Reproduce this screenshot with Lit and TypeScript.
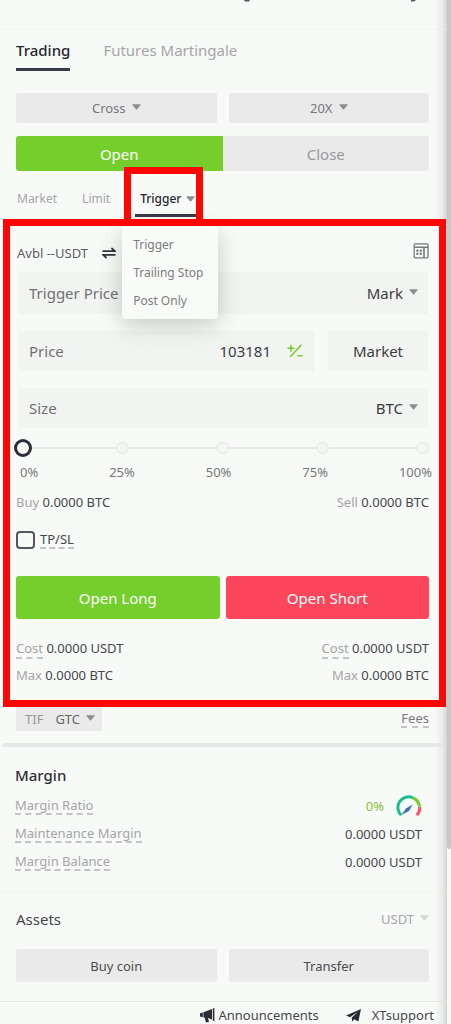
import { LitElement, html, css, svg } from "lit";
import { customElement, property, state } from "lit/decorators.js";
import { classMap } from "lit/directives/class-map.js";

const caret = html`<svg class="caret" width="9" height="6" viewBox="0 0 10 6" aria-hidden="true">
  <path d="M0.8 0h8.4q0.8 0.2 0.3 0.9L5.6 5.5q-0.6 0.6-1.2 0L0.5 0.9Q0 0.2 0.8 0z" fill="currentColor" />
</svg>`;

const shared = css`
  * {
    box-sizing: border-box;
  }
  button,
  input,
  select {
    font: inherit;
    color: inherit;
    background: none;
    border: 0;
    border-radius: 0;
    margin: 0;
    padding: 0;
  }
  button,
  select {
    cursor: pointer;
  }
  a {
    color: inherit;
    text-decoration: none;
  }
`;

@customElement("pick-list")
class PickList extends LitElement {
  @property() label = "";
  @property() value = "";
  @property({ type: Array }) options: string[] = [];

  static styles = [
    shared,
    css`
      :host {
        display: inline-flex;
      }
      .pick {
        display: flex;
        align-items: center;
        gap: 6px;
      }
      select {
        appearance: none;
        field-sizing: content;
        outline-offset: 2px;
      }
      .caret {
        margin-bottom: 2px;
        color: var(--caret, #8d8e91);
        pointer-events: none;
      }
    `,
  ];

  render() {
    return html`<label class="pick">
      <select aria-label=${this.label}>
        ${this.options.map((o) => html`<option ?selected=${o === this.value}>${o}</option>`)}
      </select>
      ${caret}
    </label>`;
  }
}

@customElement("app-root")
class AppRoot extends LitElement {
  @state() private percent = 0;
  @state() private side = "Open";

  static styles = [
    shared,
    css`
      :host {
        display: grid;
        grid-template-columns: minmax(0, 1fr) 4px;
        min-height: 100vh;
        background: #f8faf7;
        color: #46474c;
        font: 13px/20px "Noto Sans", "Open Sans", sans-serif;
        overflow: hidden;
      }
      .page {
        background: linear-gradient(to left, #d2d3d2, #e9eae8 4px, #f8faf7 12px);
      }
      .rail {
        background: #f8faf7;
      }
      .rail-thumb {
        height: 849px;
        background: #c6c7c6;
        border-radius: 0 0 2px 2px;
      }
      .clipped {
        display: flex;
        justify-content: flex-end;
        gap: 161px;
        height: 30px;
        padding-right: 30px;
        border-bottom: 1px dotted #eeefed;
      }
      .inset {
        padding: 0 18px 0 16px;
      }
      .tabs {
        display: flex;
        gap: 33px;
        height: 41px;
        font-size: 15px;
        color: #a5a5a9;
      }
      .tabs button {
        padding-top: 2px;
        border-bottom: 3px solid transparent;
      }
      .tabs .on {
        color: #26262e;
        font-weight: 500;
        border-color: #3a3947;
      }
      .pair {
        display: grid;
        grid-template-columns: 1fr 1fr;
        gap: 12px;
      }
      .modes {
        margin-top: 22px;
      }
      .grey {
        display: flex;
        align-items: center;
        justify-content: center;
        height: 30px;
        background: #eaeaea;
        border-radius: 2px;
        color: #77787b;
      }
      .sides {
        display: grid;
        grid-template-columns: 1fr 1fr;
        height: 35px;
        margin-top: 13px;
        border-radius: 3px;
        overflow: hidden;
        background: #eaeaea;
        color: #98989b;
        font-size: 15px;
      }
      .sides .on {
        background: #74ce2b;
        color: #fff;
      }
      .kinds {
        display: flex;
        gap: 25px;
        height: 48px;
        padding: 8px 0 0 1px;
        color: #a5a5a9;
        font-size: 12px;
      }
      .kinds > button {
        height: 40px;
      }
      .kind-open {
        position: relative;
        display: flex;
        align-items: flex-start;
        height: 38px;
        padding: 10px 3px 0 5px;
        border-bottom: 3px solid #3a3947;
        color: #26262e;
        font-weight: 500;
      }
      .kind-open button {
        display: flex;
        align-items: center;
        gap: 5px;
      }
      .caret {
        color: #8d8e91;
      }
      .menu {
        position: absolute;
        z-index: 2;
        top: 47px;
        left: -13px;
        width: 96px;
        margin: 0;
        padding: 5px 0 4px;
        list-style: none;
        background: #f9fbf8;
        border-radius: 4px;
        box-shadow: 0 6px 24px rgba(0, 0, 0, 0.2);
        color: #7d7d80;
        font-weight: 400;
      }
      .menu button {
        display: block;
        padding: 0;
        margin-left: 11px;
        line-height: 28px;
        white-space: nowrap;
      }
      .mark-small {
        position: absolute;
        z-index: 3;
        inset: -12px -5px -12px -11px;
        border: 7px solid #fe0603;
        pointer-events: none;
      }
      .ticket {
        position: relative;
        padding: 24px 18px 22px 16px;
      }
      .mark-large {
        position: absolute;
        z-index: 3;
        inset: 0 1px 0 3px;
        border: 7px solid #fe0603;
        pointer-events: none;
      }
      .row {
        display: flex;
        align-items: center;
        justify-content: space-between;
      }
      .avbl {
        display: flex;
        align-items: center;
        gap: 14px;
        padding-left: 1px;
        color: #5c5d61;
      }
      .icon-btn {
        display: flex;
      }
      .fields {
        display: grid;
        gap: 17px;
        padding: 0 1px 0 3px;
        margin-top: 9px;
        font-size: 15px;
      }
      .field {
        display: flex;
        align-items: center;
        justify-content: space-between;
        min-width: 0;
        height: 40px;
        padding: 0 10px;
        background: #f2f4f1;
        color: #707175;
      }
      .field.tall {
        height: 42px;
      }
      .field input {
        flex: 1;
        min-width: 0;
        width: 0;
        text-align: right;
        color: #3b3c44;
        outline: none;
      }
      .field pick-list,
      .flat {
        color: #3b3c44;
      }
      .field.price input {
        margin-right: 16px;
      }
      .price-row {
        display: grid;
        grid-template-columns: 295fr 100fr;
        gap: 14px;
      }
      .flat {
        background: #f2f4f1;
      }
      .slider {
        position: relative;
        height: 20px;
        margin: 10px -2px 0;
      }
      .slider svg {
        display: block;
        width: 100%;
        height: 20px;
        overflow: visible;
      }
      .slider input {
        position: absolute;
        inset: 0;
        width: 100%;
        height: 20px;
        appearance: none;
      }
      .slider input::-webkit-slider-thumb {
        appearance: none;
        width: 18px;
        height: 18px;
        border: 3px solid #2d2c38;
        border-radius: 50%;
        background: #f8faf7;
      }
      .scale {
        display: flex;
        justify-content: space-between;
        margin: 4px -3px 0 4px;
        color: #77787b;
      }
      .totals {
        margin-top: 10px;
      }
      .soft {
        color: #a5a5a9;
      }
      .dash {
        border-bottom: 2px dashed #c4c4c6;
      }
      .tpsl {
        display: flex;
        align-items: center;
        gap: 5px;
        margin-top: 18px;
        height: 20px;
        line-height: 16px;
        color: #46474c;
      }
      .tpsl input {
        appearance: none;
        width: 19px;
        height: 18px;
        border: 2px solid #55555f;
        border-radius: 4px;
      }
      .tpsl input:checked {
        background: #74ce2b;
      }
      .actions {
        display: grid;
        grid-template-columns: 1fr 1fr;
        gap: 6px;
        margin-top: 26px;
        color: #fff;
        font-size: 15px;
      }
      .actions button {
        height: 43px;
        border-radius: 3px;
      }
      .long {
        background: #74ce2b;
      }
      .short {
        background: #fd465b;
      }
      .costs {
        display: grid;
        gap: 7px;
        margin-top: 19px;
      }
      .tif {
        display: flex;
        align-items: center;
        gap: 12px;
        height: 24px;
        padding: 0 7px 0 9px;
        background: #eaeaea;
        color: #98989b;
      }
      .tif pick-list {
        color: #66676b;
      }
      .fees {
        color: #77787b;
        line-height: 16px;
      }
      .rule {
        height: 4px;
        margin: 12px 4px 0 3px;
        border: 0;
        background: #e7e8e8;
      }
      h2 {
        margin: 0;
        font-size: 15px;
        line-height: 20px;
        font-weight: 500;
        color: #2f3037;
      }
      .margin {
        padding: 18px 25px 19px 15px;
        border-bottom: 1px dotted #eeefed;
      }
      .stats {
        display: grid;
        gap: 8px;
        margin: 11px 0 0;
      }
      .stats .row {
        height: 20px;
      }
      .stats dt {
        color: #a5a5a9;
        line-height: 16px;
      }
      .stats dd {
        display: flex;
        align-items: center;
        gap: 12px;
        margin: 0;
      }
      .ratio {
        color: #8abf3c;
      }
      .assets {
        padding-top: 17px;
        padding-bottom: 19px;
      }
      .assets h2 {
        font-weight: 400;
        color: #46474c;
      }
      .assets .pair {
        margin-top: 20px;
      }
      .assets .grey {
        height: 33px;
        color: #4b4c50;
      }
      .unit {
        --caret: #d6d7d6;
        color: #a5a5a9;
      }
      footer {
        display: flex;
        justify-content: flex-end;
        gap: 27px;
        padding: 3px 13px 0 0;
        border-top: 1px solid #e4e5e4;
      }
      footer a {
        display: flex;
        align-items: center;
        gap: 3px;
      }
      footer a:last-child {
        gap: 11px;
      }
    `,
  ];

  private amount(label: string, value: string, dashed = false) {
    return html`<span><span class=${classMap({ soft: true, dash: dashed })}>${label}</span> ${value}</span>`;
  }

  private setPercent(e: Event) {
    this.percent = Number((e.target as HTMLInputElement).value);
  }

  render() {
    return html`
      <main class="page">
        <div class="clipped" aria-hidden="true">
          <svg width="6" height="2"><path d="M0 0h6l-1 1.4H1z" fill="#55555f" /></svg>
          <svg width="6" height="2"><path d="M0 0h5l-2 1.4H0z" fill="#55555f" /></svg>
        </div>
        <div class="inset">
          <nav class="tabs">
            <button class="on">Trading</button>
            <button>Futures Martingale</button>
          </nav>
          <div class="pair modes">
            <div class="grey"><pick-list label="Margin mode" value="Cross" .options=${["Cross"]}></pick-list></div>
            <div class="grey"><pick-list label="Leverage" value="20X" .options=${["20X"]}></pick-list></div>
          </div>
          <div class="sides">
            ${["Open", "Close"].map(
              (s) => html`<button class=${classMap({ on: this.side === s })} @click=${() => (this.side = s)}>${s}</button>`
            )}
          </div>
          <div class="kinds">
            <button>Market</button>
            <button>Limit</button>
            <div class="kind-open">
              <button aria-haspopup="menu" aria-expanded="true">Trigger ${caret}</button>
              <ul class="menu">
                ${["Trigger", "Trailing Stop", "Post Only"].map((m) => html`<li><button>${m}</button></li>`)}
              </ul>
              <div class="mark-small"></div>
            </div>
          </div>
        </div>

        <section class="ticket">
          <div class="mark-large"></div>
          <div class="row">
            <div class="avbl">
              <span>Avbl --USDT</span>
              <button class="icon-btn" aria-label="Transfer funds">
                <svg width="14" height="12" viewBox="0 0 14 12" fill="none" stroke="#33333c" stroke-width="1.7">
                  <path d="M0.5 4.2H13L9.4 1M13.5 7.8H1L4.6 11" />
                </svg>
              </button>
            </div>
            <button class="icon-btn" aria-label="Calculator">
              <svg width="16" height="20" viewBox="0 0 16 20" fill="none" stroke="#77787b" stroke-width="1.3">
                <rect x="1.2" y="0.8" width="13.8" height="14" rx="1" />
                <path d="M1.2 4.2H15M11 4.2v10.6" stroke-width="1.6" />
                <path d="M3.2 7.6h2.4M6.6 7.6H9M3.2 10.8h2.4M6.6 10.8H9" />
                <path d="M4.4 6.4v2.4M7.8 6.4v2.4M4.4 9.6V12M7.8 9.6V12" />
              </svg>
            </button>
          </div>
          <div class="fields">
            <div class="field tall">
              <label for="trigger">Trigger Price</label>
              <input id="trigger" inputmode="decimal" />
              <pick-list label="Price type" value="Mark" .options=${["Mark"]}></pick-list>
            </div>
            <div class="price-row">
              <div class="field price">
                <label for="price">Price</label>
                <input id="price" inputmode="decimal" value="103181" />
                <button class="icon-btn" aria-label="Adjust price">
                  <svg width="17" height="14" viewBox="0 0 17 14" fill="none" stroke="#74ce2b" stroke-width="1.6">
                    <path d="M0.5 4.2h7M4 0.7v7M14.5 0.8L3 13M10.5 11.8h5" />
                  </svg>
                </button>
              </div>
              <button class="flat">Market</button>
            </div>
            <div class="field">
              <label for="size">Size</label>
              <input id="size" inputmode="decimal" />
              <pick-list label="Size unit" value="BTC" .options=${["BTC"]}></pick-list>
            </div>
          </div>
          <div class="slider">
            <svg aria-hidden="true">
              <line x1="9" x2="98%" y1="10" y2="10" stroke="#e9eae9" stroke-width="2" />
              ${[26, 50, 74, 98].map(
                (x) => svg`<circle cx="${x}%" cy="10" r="5.5" fill="#f5f7f4" stroke="#e8e9e8" stroke-width="1.4" />`
              )}
            </svg>
            <input type="range" aria-label="Size percentage" min="0" max="100" .value=${String(this.percent)} @input=${this.setPercent} />
          </div>
          <div class="scale">
            ${[0, 25, 50, 75, 100].map((n) => html`<span>${n}%</span>`)}
          </div>
          <div class="row totals">${this.amount("Buy", "0.0000 BTC")}${this.amount("Sell", "0.0000 BTC")}</div>
          <label class="tpsl"><input type="checkbox" /><span class="dash">TP/SL</span></label>
          <div class="actions">
            <button class="long">Open Long</button>
            <button class="short">Open Short</button>
          </div>
          <div class="costs">
            <div class="row">${this.amount("Cost", "0.0000 USDT", true)}${this.amount("Cost", "0.0000 USDT", true)}</div>
            <div class="row">${this.amount("Max", "0.0000 BTC")}${this.amount("Max", "0.0000 BTC")}</div>
          </div>
        </section>

        <div class="inset row">
          <div class="tif">
            <span>TIF</span>
            <pick-list label="Time in force" value="GTC" .options=${["GTC"]}></pick-list>
          </div>
          <a class="fees dash" href="#fees">Fees</a>
        </div>
        <hr class="rule" />

        <section class="margin">
          <h2>Margin</h2>
          <dl class="stats">
            <div class="row">
              <dt class="dash">Margin Ratio</dt>
              <dd class="ratio">
                0%
                <svg width="26" height="22" viewBox="0 0 26 22" fill="none" stroke-width="3" aria-hidden="true">
                  <path d="M5.2 20.2A10.6 10.6 0 0 1 17.2 3" stroke="#16c08a" />
                  <path d="M17.2 3A10.6 10.6 0 0 1 23.6 11.6" stroke="#74ce2b" />
                  <path d="M23.7 12A10.6 10.6 0 0 1 20.8 20.2" stroke="#fd5563" />
                  <path d="M5.4 20L10 13.6L16.6 9.4L13 16z" fill="#3f6fb0" />
                </svg>
              </dd>
            </div>
            <div class="row">
              <dt class="dash">Maintenance Margin</dt>
              <dd>0.0000 USDT</dd>
            </div>
            <div class="row">
              <dt class="dash">Margin Balance</dt>
              <dd>0.0000 USDT</dd>
            </div>
          </dl>
        </section>

        <section class="inset assets">
          <div class="row">
            <h2>Assets</h2>
            <pick-list class="unit" label="Asset" value="USDT" .options=${["USDT"]}></pick-list>
          </div>
          <div class="pair">
            <button class="grey">Buy coin</button>
            <button class="grey">Transfer</button>
          </div>
        </section>

        <footer>
          <a href="#announcements">
            <svg width="15" height="15" viewBox="0 0 15 15" fill="#2b2b35" aria-hidden="true">
              <path d="M0 5.2L2.8 4.4v4.8L0 8.6zM3.4 4.2L12 1v10.4L8 10l1 4.2H5.8L4.6 9.6H3.4z" />
              <path d="M12.8 0.6l1.6-.6v13.4l-1.6-.8z" />
            </svg>
            Announcements
          </a>
          <a href="#support">
            <svg width="15" height="13" viewBox="0 0 15 13" fill="#2b2b35" aria-hidden="true">
              <path d="M15 0L12.4 12.4L8.2 10.2L6.4 12.8L5.6 8.8L12 2.8L4 8.2L0 6.6z" />
            </svg>
            XTsupport
          </a>
        </footer>
      </main>
      <div class="rail" aria-hidden="true"><div class="rail-thumb"></div></div>
    `;
  }
}
